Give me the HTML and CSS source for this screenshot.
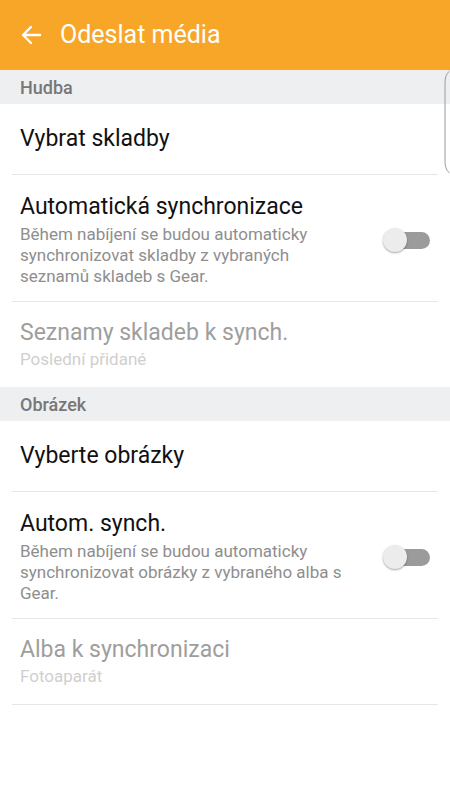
FILE: index.html
```html
<!DOCTYPE html>
<html lang="cs">
<head>
    <meta charset="UTF-8">
    <meta name="viewport" content="width=device-width, initial-scale=1.0">
    <title>Odeslat média</title>
    <link rel="stylesheet" href="styles.css">
</head>
<body>
    <header class="lista">
        <svg class="zpet" width="22" height="22" viewBox="0 0 22 22">
            <path d="M20 11H3M11 3L3 11L11 19" fill="none" stroke="#fff" stroke-width="2.4" stroke-linecap="round" stroke-linejoin="round"/>
        </svg>
        <h1 class="titulek">Odeslat média</h1>
    </header>

    <div class="sekce">Hudba</div>
    <div class="polozka jedna">
        <div class="nazev">Vybrat skladby</div>
    </div>
    <div class="polozka prepinac">
        <div class="texty">
            <div class="nazev">Automatická synchronizace</div>
            <div class="popis">Během nabíjení se budou automaticky synchronizovat skladby z vybraných seznamů skladeb s Gear.</div>
        </div>
        <span class="switch"><span class="knob"></span></span>
    </div>
    <div class="polozka vypnuto posledni">
        <div class="nazev">Seznamy skladeb k synch.</div>
        <div class="popis">Poslední přidané</div>
    </div>

    <div class="sekce">Obrázek</div>
    <div class="polozka jedna">
        <div class="nazev">Vyberte obrázky</div>
    </div>
    <div class="polozka prepinac">
        <div class="texty">
            <div class="nazev">Autom. synch.</div>
            <div class="popis">Během nabíjení se budou automaticky synchronizovat obrázky z vybraného alba s Gear.</div>
        </div>
        <span class="switch"><span class="knob"></span></span>
    </div>
    <div class="polozka vypnuto">
        <div class="nazev">Alba k synchronizaci</div>
        <div class="popis">Fotoaparát</div>
    </div>

    <svg class="okraj" width="8" height="104" viewBox="0 0 8 104">
        <path d="M7.5 1C4 4 3 8 3 14V90C3 96 4 100 7.5 103" fill="none" stroke="#9a9a9a" stroke-width="1"/>
    </svg>
</body>
</html>
```

FILE: styles.css
```css
body
{
    margin: 0;
    font-family: Roboto, "Noto Sans", sans-serif;
    background-color: #fff;
    position: relative;
    min-height: 800px;
}
.lista
{
    height: 70px;
    background-color: #f8a628;
    display: flex;
    align-items: center;
    padding-left: 20px;
}
.zpet
{
    margin-right: 18px;
    margin-top: -1px;
}
.titulek
{
    margin: 0;
    font-size: 25px;
    font-weight: normal;
    color: #fff;
    margin-top: -2px;
}
.sekce
{
    height: 34px;
    background-color: #eeeff1;
    color: #777;
    font-size: 18px;
    font-weight: 500;
    display: flex;
    align-items: center;
    padding-left: 20px;
}
.polozka
{
    margin: 0 12px;
    padding: 0 8px;
    border-bottom: 1px solid #e6e6e6;
}
.polozka.posledni
{
    border-bottom: none;
}
.jedna
{
    height: 70px;
    display: flex;
    align-items: center;
}
.nazev
{
    font-size: 23px;
    line-height: 28px;
    color: #111;
}
.popis
{
    font-size: 17px;
    line-height: 21px;
    color: #8e8e8e;
}
.prepinac
{
    display: flex;
    align-items: center;
    padding-top: 18px;
    padding-bottom: 14px;
}
.texty
{
    flex: 1;
    padding-right: 16px;
}
.prepinac .nazev
{
    margin-bottom: 3px;
}
.vypnuto
{
    height: 85px;
    display: flex;
    flex-direction: column;
    justify-content: center;
}
.vypnuto .nazev
{
    color: #9e9e9e;
}
.vypnuto .popis
{
    color: #cfcfcf;
    margin-top: 2px;
}
.switch
{
    width: 46px;
    height: 17px;
    background-color: #9b9b9b;
    border-radius: 9px;
    position: relative;
    margin-left: 12px;
    flex-shrink: 0;
}
.knob
{
    position: absolute;
    left: -1px;
    top: -4px;
    width: 24px;
    height: 24px;
    border-radius: 50%;
    background-color: #ececec;
    box-shadow: 0 1px 2px rgba(0, 0, 0, 0.35);
}
.okraj
{
    position: absolute;
    right: 0;
    top: 70px;
}
```
